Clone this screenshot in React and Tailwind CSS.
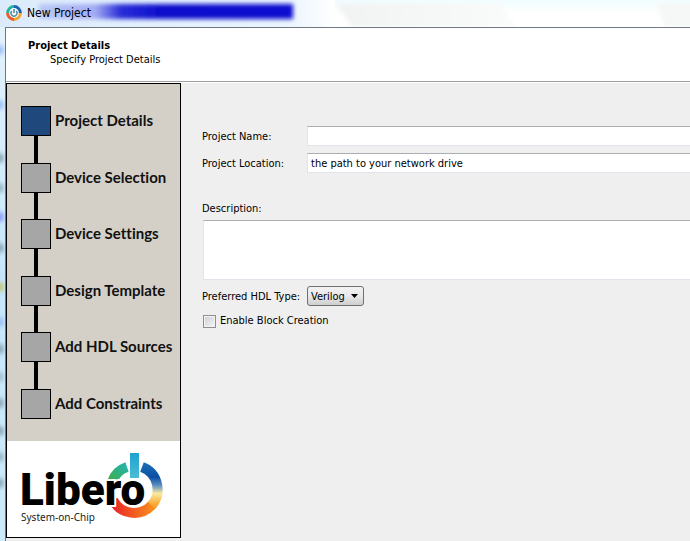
import clsx from 'clsx';

const steps = [
  { id: 'details', name: 'Project Details' },
  { id: 'device', name: 'Device Selection' },
  { id: 'settings', name: 'Device Settings' },
  { id: 'template', name: 'Design Template' },
  { id: 'sources', name: 'Add HDL Sources' },
  { id: 'constraints', name: 'Add Constraints' },
];

// Smudges of the desktop that shine through the glass frame
const smudges = [
  { y: 50, color: '#8fb4f5' },
  { y: 105, color: '#8fb8f2' },
  { y: 158, color: '#7d98a8' },
  { y: 188, color: '#8fa9ba' },
  { y: 217, color: '#8088f5' },
  { y: 248, color: '#7f97a8' },
  { y: 287, color: '#c4c25a' },
  { y: 322, color: '#8fb8f2' },
  { y: 349, color: '#7f97a8' },
  { y: 377, color: '#9db6c6' },
  { y: 403, color: '#7f97a8' },
  { y: 431, color: '#7f97a8' },
  { y: 457, color: '#8fa9ba' },
  { y: 483, color: '#7f97a8' },
];

function AppIcon() {
  return (
    <svg className="w-4 h-4 shrink-0" viewBox="0 0 16 16" fill="none" strokeWidth="3">
      <circle cx="8" cy="8" r="5" fill="#fff" />
      <path d="M1.6 8A6.4 6.4 0 0 1 8 1.6" stroke="#1fb5a0" />
      <path d="M8 1.6A6.4 6.4 0 0 1 14.4 8" stroke="#1d62b0" />
      <path d="M14.4 8A6.4 6.4 0 0 1 8 14.4" stroke="#f2a63a" />
      <path d="M8 14.4A6.4 6.4 0 0 1 1.6 8" stroke="#ee5a2a" />
      <path d="M5.8 6a3 3 0 1 0 4.4 0" stroke="#4d8aa3" strokeWidth="1.4" />
      <path d="M8 4v4" stroke="#4d8aa3" strokeWidth="1.6" />
    </svg>
  );
}

function LiberoLogo() {
  return (
    <svg className="w-[173px] h-24 block" viewBox="0 0 173 96">
      <defs>
        <linearGradient id="ringLeft" gradientUnits="userSpaceOnUse" x1="104" y1="42" x2="122" y2="22">
          <stop offset="0" stopColor="#3fae49" />
          <stop offset="1" stopColor="#1fb4b8" />
        </linearGradient>
        <linearGradient id="ringRight" gradientUnits="userSpaceOnUse" x1="142" y1="20" x2="142" y2="74">
          <stop offset="0" stopColor="#1b75bc" />
          <stop offset="0.3" stopColor="#0b4ea2" />
          <stop offset="0.45" stopColor="#5c8fc0" />
          <stop offset="0.6" stopColor="#fbe9a0" />
          <stop offset="0.8" stopColor="#f9a935" />
          <stop offset="1" stopColor="#f47b20" />
        </linearGradient>
        <linearGradient id="ringBottom" gradientUnits="userSpaceOnUse" x1="106" y1="0" x2="145" y2="0">
          <stop offset="0" stopColor="#e8242a" />
          <stop offset="0.4" stopColor="#f04e23" />
          <stop offset="1" stopColor="#f68b1f" />
        </linearGradient>
        <linearGradient id="bar" x1="0" y1="0" x2="0" y2="1">
          <stop offset="0" stopColor="#1ba3d0" />
          <stop offset="1" stopColor="#4cbcd4" />
        </linearGradient>
      </defs>
      <path d="M105 41A24 24 0 0 1 120 26" fill="none" stroke="url(#ringLeft)" strokeWidth="10" />
      <path d="M135 26A24 24 0 0 1 144 65" fill="none" stroke="url(#ringRight)" strokeWidth="10" />
      <path d="M144.5 64.6A24 24 0 0 1 106 59" fill="none" stroke="url(#ringBottom)" strokeWidth="10" />
      <rect x="123" y="12" width="9" height="25" fill="url(#bar)" />
      <text
        x="13"
        y="64"
        className="font-['Roboto',sans-serif] text-[44px] font-black"
        fill="#000"
        stroke="#fff"
        strokeWidth="4"
        paintOrder="stroke"
      >
        Libero
      </text>
      <text x="14" y="80" className="font-['Noto_Sans',sans-serif] text-[10px]" fill="#222">
        System-on-Chip
      </text>
    </svg>
  );
}

function TitleBar() {
  return (
    <header className="relative h-[27px] pl-1.5 pb-0.5 flex items-center bg-gradient-to-b from-[#effdff] via-white to-white">
      {/* Glass reflections and the blurred caption behind the title */}
      <svg className="absolute inset-0 w-full h-full" aria-hidden="true">
        <defs>
          <filter id="soft" x="-10%" y="-60%" width="120%" height="220%">
            <feGaussianBlur stdDeviation="2" />
          </filter>
          <linearGradient id="haze" x1="0" y1="0" x2="1" y2="0">
            <stop offset="0" stopColor="#dcebfb" />
            <stop offset="0.85" stopColor="#e9f4fd" />
            <stop offset="1" stopColor="#fff" />
          </linearGradient>
          <linearGradient id="reflection" x1="0" y1="0" x2="1" y2="0">
            <stop offset="0" stopColor="#f1f3f3" />
            <stop offset="1" stopColor="#fafbfb" />
          </linearGradient>
          <linearGradient id="caption" x1="0" y1="0" x2="1" y2="0">
            <stop offset="0" stopColor="#b9c9f7" />
            <stop offset="0.22" stopColor="#a3acf3" />
            <stop offset="0.32" stopColor="#2a2fd8" />
            <stop offset="0.5" stopColor="#0a0acb" />
            <stop offset="1" stopColor="#0d0dd0" />
          </linearGradient>
        </defs>
        <path d="M335 3h165l16 24H352z" fill="url(#reflection)" filter="url(#soft)" />
        <path d="M655 3h60v24h-50z" fill="#f6f8f8" filter="url(#soft)" />
        <rect x="0" y="0" width="335" height="27" fill="url(#haze)" />
        <rect x="39" y="4" width="254" height="15" fill="url(#caption)" filter="url(#soft)" />
      </svg>
      <div className="relative flex items-center gap-[5px]">
        <AppIcon />
        <h1 className="text-[12px] leading-4">New Project</h1>
      </div>
    </header>
  );
}

function StepList({ current }) {
  return (
    <ol className="flex-1 flex flex-col pl-3.5 py-[22px] bg-[#d4d0c8]">
      {steps.map((step, i) => {
        const last = i === steps.length - 1;
        return (
          <li key={step.id} className={clsx('flex gap-1', !last && 'flex-1')}>
            <div className="flex flex-col items-center">
              <div
                className={clsx(
                  'w-[30px] h-[30px] border border-black',
                  step.id === current ? 'bg-[#1f497d]' : 'bg-[#a6a6a6]'
                )}
              />
              {!last && <div className="w-1 flex-1 bg-black" />}
            </div>
            <span className="h-7 flex items-center font-['Lato',sans-serif] font-bold text-[15px] text-[#111] [font-variant-ligatures:none]">
              {step.name}
            </span>
          </li>
        );
      })}
    </ol>
  );
}

export default function App() {
  return (
    <div className="min-h-screen flex flex-col overflow-hidden bg-[#d3ecfb] font-['DejaVu_Sans_Condensed','DejaVu_Sans',sans-serif] text-[11px] leading-[14px] text-black">
      <TitleBar />

      <div className="flex-1 flex">
        {/* Left glass edge */}
        <div className="relative w-[5px] shrink-0 bg-gradient-to-b from-[#e4f2fc] via-[#c4e6fa] to-[#cdeafa]">
          <svg className="absolute inset-0 w-full h-full" aria-hidden="true">
            <g filter="url(#soft)" opacity="0.8">
              {smudges.map((s) => (
                <ellipse key={s.y} cx="0" cy={s.y - 27} rx="4" ry="5" fill={s.color} />
              ))}
            </g>
          </svg>
        </div>

        <div className="flex-1 min-w-0 flex flex-col border-t border-l border-[#6f7880] bg-[#efefef]">
          <div className="h-[54px] pt-[11px] pl-[22px] bg-white border-b border-[#a0a0a0]">
            <h2 className="font-bold">Project Details</h2>
            <p className="pl-[22px]">Specify Project Details</p>
          </div>

          <div className="flex-1 flex border-t border-white">
            <aside className="w-[175px] shrink-0 mb-[3px] flex flex-col border border-black bg-white">
              <StepList current="details" />
              <LiberoLogo />
            </aside>

            <form className="flex-1 min-w-0 pt-[43px] pl-[21px]">
              <div className="grid grid-cols-[105px_1fr] gap-y-[7px] items-center">
                <label htmlFor="name" className="pt-0.5">Project Name:</label>
                <input
                  id="name"
                  type="text"
                  className="h-5 w-full px-[3px] bg-white border border-r-0 border-[#e2e3ea] border-t-[#abadb3] outline-none"
                />
                <label htmlFor="location" className="pt-0.5">Project Location:</label>
                <input
                  id="location"
                  type="text"
                  defaultValue="the path to your network drive"
                  className="h-5 w-full px-[3px] pt-px bg-white border border-r-0 border-[#e2e3ea] border-t-[#abadb3] outline-none"
                />
              </div>

              <label htmlFor="description" className="block mt-7 pt-px">Description:</label>
              <div className="mt-1 pl-px">
                <textarea
                  id="description"
                  className="block h-[60px] w-full px-[3px] bg-white border border-r-0 border-[#e2e3ea] border-t-[#abadb3] resize-none outline-none"
                />
              </div>

              <div className="mt-1.5 grid grid-cols-[105px_1fr] items-center">
                <label htmlFor="hdl" className="pt-0.5">Preferred HDL Type:</label>
                <div className="relative w-[57px]">
                  <select
                    id="hdl"
                    defaultValue="verilog"
                    className="block appearance-none h-5 w-full pl-[3px] pt-px border border-[#707070] rounded-[3px] bg-gradient-to-b from-[#f2f2f2] via-[#e8e8e8] to-[#cfcfcf]"
                  >
                    <option value="verilog">Verilog</option>
                    <option value="vhdl">VHDL</option>
                  </select>
                  <svg className="absolute right-1.5 top-2 w-[7px] h-1 pointer-events-none" viewBox="0 0 7 4">
                    <path d="M0 0h7L3.5 4z" fill="#000" />
                  </svg>
                </div>
              </div>

              <label className="mt-2 pl-px flex items-center gap-1">
                <input
                  type="checkbox"
                  className="appearance-none w-[13px] h-[13px] border border-[#8e8f8f] bg-gradient-to-br from-[#cbcfd5] to-[#f6f6f6] shadow-[inset_0_0_0_1px_#f4f4f4] checked:bg-[#1f497d]"
                />
                <span>Enable Block Creation</span>
              </label>
            </form>
          </div>
        </div>
      </div>
    </div>
  );
}
